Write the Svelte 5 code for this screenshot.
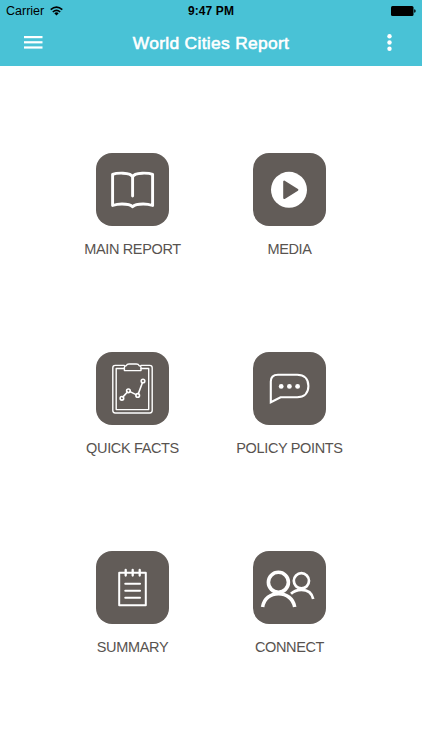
<script>
    const title = "World Cities Report";
    const items = [
        { icon: "book", label: "MAIN REPORT" },
        { icon: "play", label: "MEDIA" },
        { icon: "facts", label: "QUICK FACTS" },
        { icon: "chat", label: "POLICY POINTS" },
        { icon: "notes", label: "SUMMARY" },
        { icon: "people", label: "CONNECT" },
    ];
</script>

<div class="screen">
    <header>
        <div class="status">
            <div class="carrier">
                <span>Carrier</span>
                <svg width="13" height="10" viewBox="0 0 13 10" fill="none" stroke="#000" stroke-width="1.6">
                    <path d="M0.7 3.7Q6.5 -1.6 12.3 3.7" />
                    <path d="M2.8 6Q6.5 2.6 10.2 6" />
                    <path d="M4.3 7.2Q6.5 5.4 8.7 7.2L6.5 9.5Z" fill="#000" stroke="none" />
                </svg>
            </div>
            <span class="time">9:47 PM</span>
            <div class="battery">
                <svg width="25" height="10" viewBox="0 0 25 10">
                    <rect width="22.5" height="10" rx="1.5" />
                    <path d="M23.2 3.3Q24.7 3.5 24.7 5T23.2 6.7Z" />
                </svg>
            </div>
        </div>
        <nav>
            <button aria-label="Menu">
                <svg width="19" height="13" viewBox="0 0 19 13" fill="#fff">
                    <rect width="18.5" height="2.2" />
                    <rect y="5.2" width="18.5" height="2.2" />
                    <rect y="10.4" width="18.5" height="2.2" />
                </svg>
            </button>
            <h1>{title}</h1>
            <button class="more" aria-label="More">
                <svg width="5" height="17" viewBox="0 0 5 17" fill="#fff">
                    <circle cx="2.5" cy="2.3" r="2.2" />
                    <circle cx="2.5" cy="8.5" r="2.2" />
                    <circle cx="2.5" cy="14.7" r="2.2" />
                </svg>
            </button>
        </nav>
    </header>

    <main>
        {#each items as item}
            <div class="item">
                <div class="tile">
                    <svg viewBox="0 0 73 73" fill="none" stroke="#fff" stroke-linecap="round" stroke-linejoin="round">
                        {#if item.icon === "book"}
                            <path
                                stroke-width="2.9"
                                d="M36.6 43V24Q35.4 20.5 27 20.2Q20 20 16.6 21.3V52.5Q21 51 26 51Q34 51 36.6 53.8Q39.2 51 47.2 51Q52.2 51 56.6 52.5V21.3Q53.2 20 46.2 20.2Q37.8 20.5 36.6 24"
                            />
                        {:else if item.icon === "play"}
                            <circle cx="36" cy="36.8" r="18" fill="#fff" stroke="none" />
                            <path d="M31.2 28.5V45.1L44.4 36.8Z" fill="#625c58" stroke="#625c58" stroke-width="2" />
                        {:else if item.icon === "facts"}
                            <g stroke-width="1.4">
                                <path d="M28.3 13.4H19.2Q16.8 13.4 16.8 15.8V58.6Q16.8 61 19.2 61H53.8Q56.2 61 56.2 58.6V15.8Q56.2 13.4 53.8 13.4H45" />
                                <path d="M28.3 16.5H20.2V57.6H52.7V16.5H45" />
                                <path d="M28.4 18.6V15.3Q28.4 13.8 30.2 13.8Q31 12 33 12H40.4Q42.4 12 43.2 13.8Q45 13.8 45 15.3V18.6Z" />
                            </g>
                            <g stroke-width="1.6">
                                <path d="M27 44.9L31.2 40.2M34 39.6L40 42.6M42.4 41.6L46.3 30.9" />
                                <circle cx="25.9" cy="46.3" r="1.8" />
                                <circle cx="32.4" cy="38.8" r="1.8" />
                                <circle cx="41.7" cy="43.4" r="1.8" />
                                <circle cx="47" cy="29" r="1.8" />
                            </g>
                        {:else if item.icon === "chat"}
                            <path
                                stroke-width="2.1"
                                stroke-linejoin="miter"
                                d="M17.8 50.2V29.5Q17.8 22.8 25 22.8H44.2C51.2 22.8 55.4 27 55.4 34S51.2 45.2 44.2 45.2H27.6Z"
                            />
                            <g fill="#fff" stroke="none">
                                <circle cx="28.2" cy="34.4" r="2.4" />
                                <circle cx="36.4" cy="34.4" r="2.4" />
                                <circle cx="44.6" cy="34.4" r="2.4" />
                            </g>
                        {:else if item.icon === "notes"}
                            <rect x="23.2" y="21.8" width="26.6" height="32.4" stroke-width="2" />
                            <path stroke-width="2.3" d="M29.7 19V24.5M36.7 19V24.5M43.7 19V24.5" />
                            <path stroke-width="2.1" d="M29.3 32.7H44M29.3 39.7H44M29.3 46.7H44" />
                        {:else}
                            <g stroke-linecap="butt" stroke-width="3.6">
                                <circle cx="25.4" cy="31.3" r="10" />
                                <path d="M9.6 56C11 47.5 17.5 42.8 25.5 42.8S40.3 47.5 41.7 56" />
                            </g>
                            <g stroke-linecap="butt" stroke-width="2.7">
                                <circle cx="48.4" cy="29.8" r="7.6" />
                                <path d="M38 42.8C40.8 40 44.4 38.8 48.4 38.8C54.5 38.8 59 42 60.2 48" />
                            </g>
                        {/if}
                    </svg>
                </div>
                <p>{item.label}</p>
            </div>
        {/each}
    </main>
</div>

<style>
    :global(body) {
        background: #fff;
    }
    .screen {
        width: 422px;
        height: 750px;
        overflow: hidden;
        background: #fff;
        font-family: "Liberation Sans", Arial, sans-serif;
    }
    header {
        height: 65.5px;
        background: #49c2d6;
    }
    .status {
        display: grid;
        grid-template-columns: 1fr auto 1fr;
        align-items: center;
        height: 22px;
        padding: 0 6px;
        font-size: 12.5px;
        color: #000;
    }
    .carrier {
        display: flex;
        align-items: center;
        gap: 6px;
    }
    .time {
        font-weight: bold;
        font-size: 12px;
        letter-spacing: 0.1px;
    }
    .battery {
        display: flex;
        justify-content: flex-end;
    }
    nav {
        display: grid;
        grid-template-columns: 1fr auto 1fr;
        align-items: center;
        height: 41px;
        padding: 0 30.5px 0 23.5px;
    }
    button {
        display: flex;
        padding: 0;
        border: 0;
        background: none;
    }
    .more {
        justify-content: flex-end;
    }
    h1 {
        margin: 2px -3.5px 0 3.5px;
        font-size: 17.4px;
        font-weight: normal;
        letter-spacing: 0.32px;
        -webkit-text-stroke: 0.6px #fff;
        white-space: nowrap;
        color: #fff;
    }
    main {
        display: grid;
        grid-template-columns: 157px 157px;
        grid-auto-rows: 199px;
        justify-content: center;
        padding-top: 87.7px;
    }
    .item {
        display: flex;
        flex-direction: column;
        align-items: center;
    }
    .tile {
        width: 73px;
        height: 73px;
        border-radius: 16px;
        background: #625c58;
    }
    .tile svg {
        display: block;
    }
    p {
        margin: 14px 0 0;
        font-size: 14.5px;
        line-height: 18px;
        letter-spacing: -0.35px;
        white-space: nowrap;
        color: #58534f;
    }
</style>
